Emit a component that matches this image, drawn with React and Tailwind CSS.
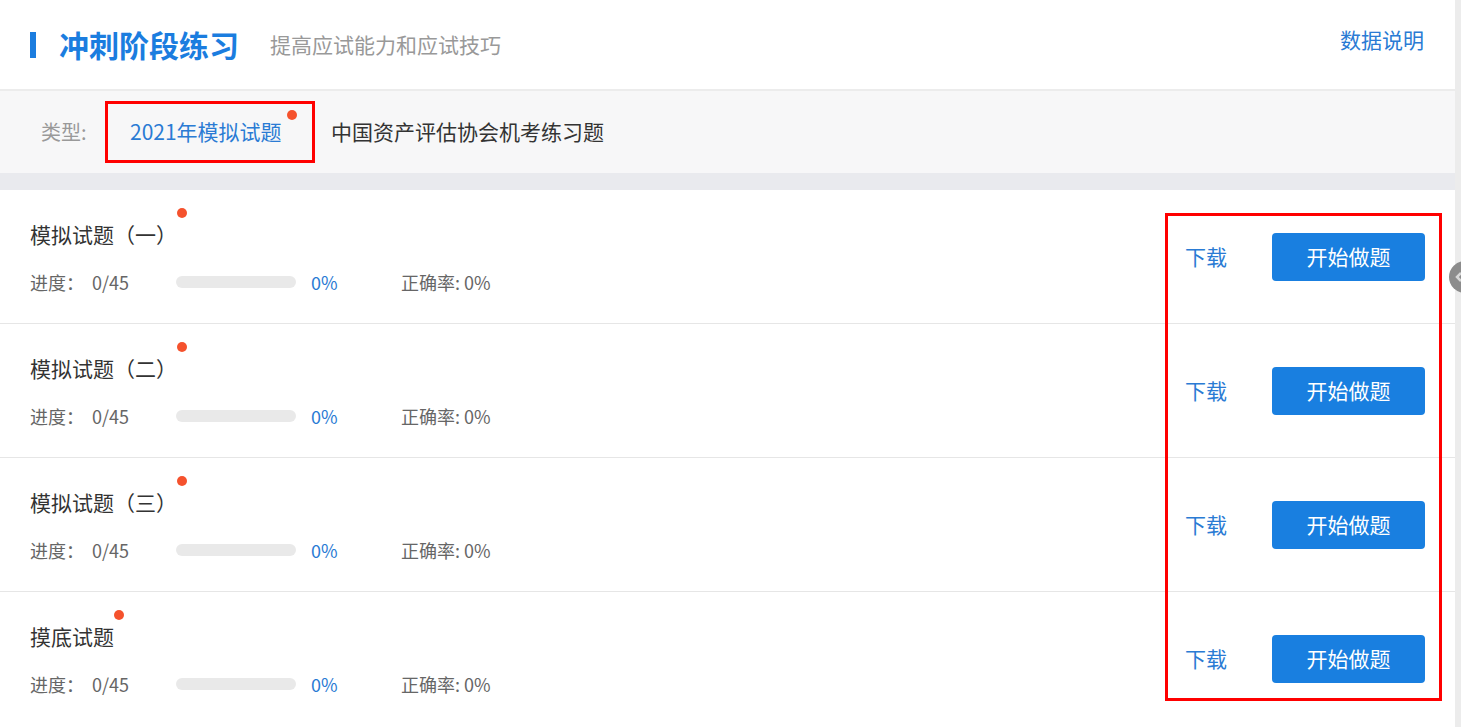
const font = { fontFamily: '"Noto Sans CJK SC", "Noto Sans", sans-serif' };

const papers = ['模拟试题（一）', '模拟试题（二）', '模拟试题（三）', '摸底试题'];

function PaperRow({ title, last }) {
  return (
    <div className={`flex h-[134px] items-center justify-between pl-[30px] pr-[30px] ${last ? '' : 'border-b border-[#e6e6e6]'}`}>
      <div className="flex flex-col">
        <div className="relative self-start text-[21px] leading-[28px] text-[#333]">
          {title}
          <span className="absolute -right-[10px] -top-[12px] h-[10px] w-[10px] rounded-full bg-[#f5522d]" />
        </div>
        <div className="mt-[22px] flex items-center text-[18px] leading-[24px] text-[#666]">
          <span className="w-[146px] whitespace-pre">进度：  0/45</span>
          <span className="h-[12px] w-[120px] rounded-full bg-[#e9e9e9]" />
          <span className="ml-[15px] w-[90px] text-[#2a7bd4]">0%</span>
          <span>正确率: 0%</span>
        </div>
      </div>
      <div className="flex items-center">
        <span className="text-[21px] text-[#2a7bd4]">下载</span>
        <button className="ml-[45px] h-[48px] w-[153px] rounded-[4px] bg-[#197fe0] text-[21px] text-white">
          开始做题
        </button>
      </div>
    </div>
  );
}

export default function App() {
  return (
    <div className="relative flex h-[727px] w-[1461px] overflow-hidden bg-white" style={font}>
      <div className="flex w-[1455px] flex-col">
        {/* Header */}
        <div className="flex h-[91px] shrink-0 items-center justify-between border-b-2 border-[#ececec] pl-[30px] pr-[31px]">
          <div className="flex items-center">
            <span className="h-[26px] w-[6px] bg-[#1b7ddf]" />
            <h1 className="ml-[23px] text-[30px] font-bold text-[#1b7ddf]">冲刺阶段练习</h1>
            <span className="ml-[31px] text-[21px] text-[#999]">提高应试能力和应试技巧</span>
          </div>
          <span className="-mt-[10px] text-[21px] text-[#2a7bd4]">数据说明</span>
        </div>

        {/* Type filter */}
        <div className="flex h-[82px] shrink-0 items-center bg-[#f7f7f8] pl-[41px]">
          <span className="w-[64px] text-[20px] text-[#999]">类型:</span>
          <div className="relative flex h-[62px] w-[210px] items-center border-[3px] border-[#f00] pl-[22px]">
            <span className="text-[21px] text-[#2a7bd4]">2021年模拟试题</span>
            <span className="absolute left-[179px] top-[6px] h-[10px] w-[10px] rounded-full bg-[#f5522d]" />
          </div>
          <span className="ml-[16px] text-[21px] text-[#333]">中国资产评估协会机考练习题</span>
        </div>

        <div className="h-[17px] shrink-0 bg-[#e9eaee]" />

        {/* Paper list */}
        <div className="relative flex-1">
          {papers.map((p, i) => (
            <PaperRow key={p} title={p} last={i === papers.length - 1} />
          ))}
          <div className="pointer-events-none absolute left-[1165px] top-[23px] h-[488px] w-[277px] border-[3px] border-[#f00]" />
        </div>
      </div>
      <div className="w-[6px] bg-[#ececec]" />
      <div className="absolute left-[1449px] top-[261px] flex h-[32px] w-[32px] items-center rounded-full bg-[#8c8c8c] pl-[5px]">
        <svg width="10" height="12" viewBox="0 0 10 12">
          <path d="M7 2 L3 6 L7 10" stroke="#d8d8d8" strokeWidth="2.5" fill="none" />
        </svg>
      </div>
    </div>
  );
}
